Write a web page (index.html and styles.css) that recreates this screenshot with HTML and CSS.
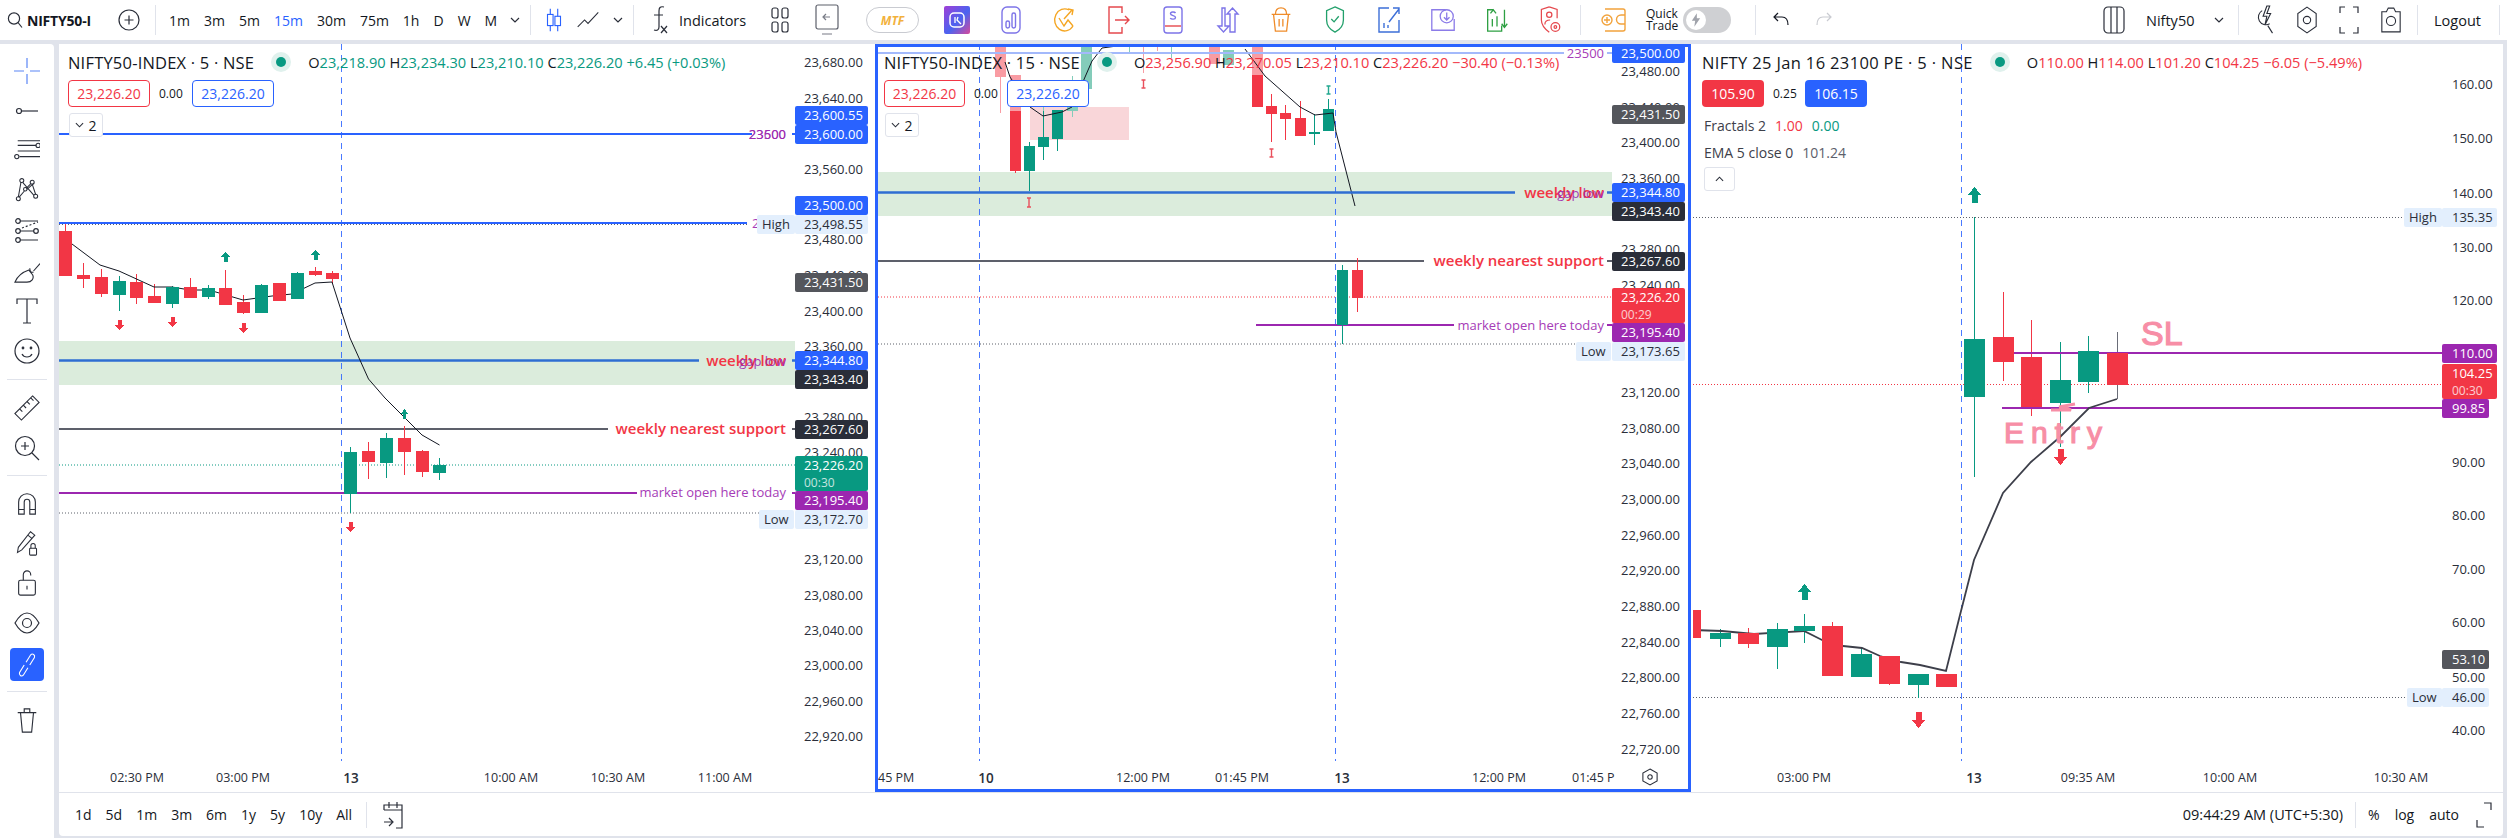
FILE: index.html
```html
<!DOCTYPE html>
<html lang="en">
<head>
<meta charset="utf-8">
<title>NIFTY50 charts</title>
<link rel="stylesheet" href="styles.css">
</head>
<body>
<div class="app">
  <header class="topbar">
    <div class="g g-sym">
      <svg class="i i16" viewBox="0 0 16 18"><circle cx="7" cy="7.5" r="5.6"/><path d="M11 11.5l4 5"/></svg>
      <span class="sym">NIFTY50-I</span>
      <svg class="i plus" viewBox="0 0 22 22"><circle cx="11" cy="11" r="10"/><path d="M11 6.500v9M6.500 11h9"/></svg>
    </div>
    <i class="sep"></i>
    <div class="g g-tf">
      <span class="tf">1m</span><span class="tf">3m</span><span class="tf">5m</span><span class="tf on">15m</span><span class="tf">30m</span><span class="tf">75m</span><span class="tf">1h</span><span class="tf">D</span><span class="tf">W</span><span class="tf">M</span>
      <svg class="i chev" viewBox="0 0 10 6"><path d="M1 1l4 4 4-4"/></svg>
    </div>
    <i class="sep"></i>
    <div class="g g-type">
      <svg class="i blue i24" viewBox="0 0 20 28"><path d="M6 2v24M14 2v24"/><rect x="3" y="8" width="6" height="12" fill="#fff"/><rect x="11" y="10" width="6" height="10" fill="#fff"/></svg>
      <svg class="i i24 line" viewBox="0 0 28 24"><path d="M2 20l8-8 4 4 12-13"/></svg>
      <svg class="i chev" viewBox="0 0 10 6"><path d="M1 1l4 4 4-4"/></svg>
    </div>
    <i class="sep"></i>
    <div class="g g-ind">
      <svg class="i fx" viewBox="0 0 20 30"><path d="M14 2c-4-1-5 1-5 4v16c0 3-2 4-5 3M4 10h9"/><path d="M11 21l6 7M17 21l-6 7"/></svg>
      <span class="indic">Indicators</span>
      <svg class="i grid" viewBox="0 0 18 26"><rect x="1" y="1" width="6" height="10" rx="2"/><rect x="11" y="1" width="6" height="10" rx="2"/><rect x="1" y="15" width="6" height="10" rx="2"/><rect x="11" y="15" width="6" height="10" rx="2"/></svg>
      <svg class="i replay" viewBox="0 0 24 32"><rect x="1" y="1" width="22" height="24" rx="2"/><path d="M15 13H9M11 10l-3 3 3 3M7 30h10" stroke="#787b86"/></svg>
      <span class="mtf">MTF</span>
      <span class="ib"><svg class="c" viewBox="0 0 26 28"><defs><linearGradient id="gr" x1="0" y1="0" x2="1" y2="1"><stop offset="0" stop-color="#a13fd6"/><stop offset=".55" stop-color="#4a63f0"/><stop offset="1" stop-color="#d74a9b"/></linearGradient></defs><rect width="26" height="28" rx="2" fill="url(#gr)"/><rect x="6" y="7" width="14" height="14" rx="4" fill="none" stroke="#fff" stroke-width="1.500"/><path d="M11 11v6M14 11l-1 3 4 4" fill="none" stroke="#fff" stroke-width="1.300"/></svg></span>
      <span class="ib"><svg class="c st s-vio" viewBox="0 0 20 28"><rect x="1" y="1" width="18" height="26" rx="5"/><rect x="5" y="15" width="3.500" height="7" rx="1.700"/><rect x="11" y="7" width="3.500" height="15" rx="1.700"/></svg></span>
      <span class="ib"><svg class="c st s-amb" viewBox="0 0 22 28"><path d="M15 4A10 11 0 1 0 19 20"/><path d="M5 12l5 8 4-6 5 6M14 3l5 1-1 5M18 4l-8 9"/></svg></span>
      <span class="ib"><svg class="c st s-red" viewBox="0 0 24 28"><path d="M15 7V1H2v26h13v-6"/><path d="M8 14h14M18 10l4 4-4 4"/></svg></span>
      <span class="ib"><svg class="c st s-vio" viewBox="0 0 20 28"><rect x="1" y="1" width="18" height="26" rx="3"/><path d="M2 20h16" stroke="#e5484d"/><path d="M12.500 7c-1-1.500-5-1.500-5 .7s5 1.600 5 3.700-4 2.300-5.300.7"/></svg></span>
      <span class="ib"><svg class="c st s-vio" viewBox="0 0 24 28"><path d="M7 2v18h-4l5.500 6 5.500-6h-4V2zM15 26V8h-3l5.500-6L23 8h-3v18z"/></svg></span>
      <span class="ib"><svg class="c st s-org" viewBox="0 0 24 30"><path d="M2 9h20M4 9l2 18h12l2-18M6 9c0-4 2-7 6-7s6 3 6 7M10 14v8M14 14v8"/></svg></span>
      <span class="ib"><svg class="c st s-grn" viewBox="0 0 20 30"><path d="M10 1l9 4v10c0 7-5 11-9 13-4-2-9-6-9-13V5z"/><path d="M6 14l3 3 5-6"/></svg></span>
      <span class="ib"><svg class="c st s-blu" viewBox="0 0 22 28"><path d="M11 2H1v24h20V14"/><path d="M11 16L21 3M15 2h6v6M6 22v-5M10 22v-3"/></svg></span>
      <span class="ib"><svg class="c st s-lav" viewBox="0 0 26 30"><path d="M16 4H1v22h24V14"/><circle cx="17" cy="11" r="7"/><path d="M17 7v8M14 12l3 3 3-3"/></svg></span>
      <span class="ib"><svg class="c st s-lim" viewBox="0 0 24 30"><path d="M8 4H2v23h15v-6"/><path d="M7 22v-8M12 22v-11M20 4v18M17 19l3 4 3-4M5 8l3-4 3 4"/></svg></span>
      <span class="ib"><svg class="c st s-red" viewBox="0 0 24 32"><path d="M10 1l9 3v10M10 1L1 4v12c0 7 5 11 9 14"/><circle cx="10" cy="10" r="3"/><path d="M5 21c0-4 3-5 6-5"/><circle cx="17" cy="24" r="5"/><circle cx="17" cy="24" r="1.500"/></svg></span>
    </div>
    <i class="sep"></i>
    <div class="g g-quick">
      <svg class="c st wallet" viewBox="0 0 26 26"><path d="M4 2h18a2 2 0 0 1 2 2v18a2 2 0 0 1-2 2H4"/><path d="M24 8h-4a4 4 0 0 0 0 9h4"/><circle cx="6" cy="13" r="5"/><path d="M6 10v6M3 13h6"/></svg>
      <span class="quick">Quick<br>Trade</span>
      <span class="toggle"><span class="knob"><svg viewBox="0 0 12 18"><path d="M7 1L1 10h4l-1 7 7-10H7z" fill="#a0a3ab"/></svg></span></span>
    </div>
    <i class="sep"></i>
    <div class="g g-undo">
      <svg class="i undo" viewBox="0 0 18 18"><path d="M6 2L2 6l4 4M2 6h8c4 0 6 3 6 8"/></svg>
      <svg class="i undo dim" viewBox="0 0 18 18"><path d="M12 2l4 4-4 4M16 6H8c-4 0-6 3-6 8"/></svg>
    </div>
    <div class="g g-right">
      <svg class="i layout" viewBox="0 0 22 28"><rect x="1" y="1" width="20" height="26" rx="4"/><path d="M8 1v26M14 1v26"/></svg>
      <span class="lname">Nifty50</span>
      <svg class="i chev" viewBox="0 0 10 6"><path d="M1 1l4 4 4-4"/></svg>
      <i class="sep"></i>
      <svg class="i ri" viewBox="0 0 22 32"><path d="M8 6a8 8 0 1 0 8 14M14 22l5 8"/><path d="M13 1l-4 11h4l-2 9 6-12h-4l3-8z"/></svg>
      <svg class="i ri" viewBox="0 0 24 30"><path d="M12 1l10 7v14l-10 7-10-7V8z"/><circle cx="12" cy="15" r="4"/></svg>
      <svg class="i ri" viewBox="0 0 20 30"><path d="M1 8V2h5M14 2h5v6M19 22v6h-5M6 28H1v-6"/></svg>
      <svg class="i ri" viewBox="0 0 24 30"><path d="M2 6h5l2-4h6l2 4h5v22H2z"/><circle cx="12" cy="16" r="5"/></svg>
      <i class="sep"></i>
      <span class="logout">Logout</span>
      <i class="sep"></i>
    </div>
  </header>

  <div class="main">
    <nav class="lefttb">
      <span class="tool"><svg class="t blue" viewBox="0 0 26 26"><path d="M13 0v10M13 16v10M0 13h10M16 13h10"/></svg></span>
      <span class="tool"><svg class="t" viewBox="0 0 26 26"><circle cx="5" cy="13" r="2.500"/><path d="M7.500 13H24"/></svg></span>
      <span class="tool"><svg class="t" viewBox="0 0 28 26"><path d="M4 2h24M4 7h20M4 13h24M6 19h22"/><circle cx="26" cy="7" r="2.300"/><circle cx="3" cy="19" r="2.300"/></svg></span>
      <span class="tool"><svg class="t" viewBox="0 0 26 30"><circle cx="7" cy="3" r="2.300"/><circle cx="19" cy="5" r="2.300"/><circle cx="11" cy="13" r="2"/><circle cx="3" cy="24" r="2.300"/><circle cx="23" cy="21" r="2.300"/><path d="M6 5L3 22M8 5l13 15M17 7l-5 5M10 15l-6 7M13 13l8-7M19 7l4 12"/></svg></span>
      <span class="tool"><svg class="t" viewBox="0 0 26 26"><circle cx="4" cy="3" r="2.300"/><circle cx="4" cy="13" r="2.300"/><circle cx="22" cy="13" r="2.300"/><circle cx="4" cy="22" r="2.300"/><path d="M6 3h18M6 13h14M6 22h18"/><path d="M8 10l16-6" stroke-dasharray="2 2"/></svg></span>
      <span class="tool"><svg class="t" viewBox="0 0 28 26"><path d="M1 25h13c5 0 8-4 6-8l-4-5c-6 2-12 6-15 13zM21 13l7-8M17 10c0 4 2 5 4 4"/></svg></span>
      <span class="tool"><svg class="t" viewBox="0 0 22 26"><path d="M1 6V1h20v5M11 1v24M7 25h8"/></svg></span>
      <span class="tool"><svg class="t" viewBox="0 0 26 26"><circle cx="13" cy="13" r="12"/><circle cx="9" cy="10" r=".8"/><circle cx="17" cy="10" r=".8"/><path d="M8 16c2 4 8 4 10 0"/></svg></span>
      <i class="tsep"></i>
      <span class="tool"><svg class="t" viewBox="0 0 28 28"><path d="M20 1l7 7L8 27l-7-7zM6 15l3 3M10 11l3 3M14 7l3 3M18 3l3 3"/></svg></span>
      <span class="tool"><svg class="t" viewBox="0 0 26 26"><circle cx="11" cy="11" r="9.500"/><path d="M11 7v8M7 11h8M18 18l7 7"/></svg></span>
      <i class="tsep s2"></i>
      <span class="tool"><svg class="t" viewBox="0 0 24 28"><path d="M3 26v-13a9 9 0 0 1 18 0v13h-6v-13a3 3 0 0 0-6 0v13zM3 21h6M15 21h6"/></svg></span>
      <span class="tool"><svg class="t" viewBox="0 0 24 30"><path d="M16 2l5 4-15 17-5 3 1-6zM13 6l5 4"/><rect x="15" y="21" width="8" height="8" rx="1"/><path d="M16.500 21v-3a2.500 2.500 0 0 1 5 0v3"/></svg></span>
      <span class="tool"><svg class="t" viewBox="0 0 20 28"><rect x="1" y="11" width="18" height="16" rx="2"/><path d="M6 11V5a4 4 0 0 1 8 0v1M10 17v4"/></svg></span>
      <span class="tool"><svg class="t" viewBox="0 0 26 26"><path d="M1 13C5 6 9 3 13 3s8 3 12 10c-4 7-8 10-12 10S5 20 1 13z"/><circle cx="13" cy="13" r="4.500"/></svg></span>
      <span class="tool act"><svg class="t" viewBox="0 0 20 28"><path d="M9 11l5-8c2-2 5 0 4 3l-5 8M11 17l-5 8c-2 2-5 0-4-3l5-8"/></svg></span>
      <i class="tsep"></i>
      <span class="tool"><svg class="t" viewBox="0 0 22 28"><path d="M1 6h20M4 6l2 21h10l2-21M8 6V2h6v4"/></svg></span>
    </nav>

    <section class="content">
      <div class="charts">

        <!-- chart 1 -->
        <article class="chart c1">
          <svg class="canvas" viewBox="59 44 816 748">
            <rect class="zone" x="59" y="341" width="736" height="44"/>
            <path class="vdash" d="M341.500 44V761"/>
            <path class="ln blue" d="M59 134H752M792 134h3M59 223H747M792 223h3"/>
            <path class="dot dk" d="M59 224.500H747M59 513H759"/>
            <path class="dot gn" d="M59 465H795"/>
            <path class="ln bluez" d="M59 360.500H699M792 360.500h3"/>
            <path class="ln gray" d="M59 429H608M792 429h3"/>
            <path class="ln purple" d="M59 493H637M792 493h3"/>
            <path class="wick rd" d="M65.500 224V231M83.500 263V288M101.500 269V297M136.500 274V304M154.500 284V303M190.500 278V298M225.500 270V305M243.500 295V314M315.500 267V276M332.500 271V284M368.500 442V479M404.500 426V475M422.500 450V477"/>
            <path class="wick gr" d="M119.500 276V311M172.500 286V308M208.500 285V299M261.500 284V313M297.500 272V299M350.500 447V513M386.500 433V478M439.500 458V480"/>
            <path class="ema" d="M72 244L100 265 119 271 154 287 172 287 190 290 209 290 243 300 272 296 292 294 315 283 332 282 350 338 368.500 379 385 398 404 417 422 435 439.500 445"/>
            <path class="b rd" d="M59 231h13v45h-13zM77 275h13v4h-13zM95 277h13v17h-13zM130 282h13v16h-13zM148 296h13v7h-13zM184 287h13v11h-13zM219 288h13v17h-13zM237 302h13v11h-13zM273 283h13v18h-13zM309 271h13v4h-13zM326 273h13v6h-13zM362 451h13v11h-13zM398 438h13v14h-13zM416 451h13v21h-13z"/>
            <path class="b gr" d="M113 281h13v14h-13zM166 287h13v17h-13zM202 288h13v9h-13zM255 285h13v28h-13zM291 273h13v26h-13zM344 452h13v42h-13zM380 438h13v25h-13zM433 465h13v8h-13z"/>
            <path class="b gr" d="M225.500 252l5 5h-3v5h-4v-5h-3zM315.500 250l5 5h-3v5h-4v-5h-3zM404.500 409l3.500 5h-2v5h-3v-5h-2z"/>
            <path class="b rd" d="M119.500 330l5-5h-3v-5h-4v5h-3zM172.500 327l5-5h-3v-5h-4v5h-3zM243.500 333l5-5h-3v-5h-4v5h-3zM350.500 532l5-5h-3v-5h-4v5h-3z"/>
            <text class="tx pp" x="786" y="139" text-anchor="end">23600</text>
            <text class="tx pp" x="786" y="139" text-anchor="end">23500</text>
            <text class="tx pp" x="752" y="228">23500</text>
            <text class="tx rdt bl" x="786" y="366" text-anchor="end">weekly low</text>
            <text class="tx pp" x="786" y="366" text-anchor="end">gap low</text>
            <text class="tx rdt bl" x="786" y="434" text-anchor="end">weekly nearest support</text>
            <text class="tx pp" x="786" y="497" text-anchor="end">market open here today</text>
          </svg>
          <div class="legend">
            <div class="row r1"><span class="title">NIFTY50-INDEX · 5 · NSE</span><span class="live"></span><span class="ohlc gt"><b>O</b>23,218.90 <b>H</b>23,234.30 <b>L</b>23,210.10 <b>C</b>23,226.20 +6.45 (+0.03%)</span></div>
            <div class="row r2"><span class="px out-r w82">23,226.20</span><span class="spread">0.00</span><span class="px out-b w82">23,226.20</span></div>
            <div class="row r3"><span class="fold"><svg class="i" viewBox="0 0 10 6"><path d="M1 1l4 4 4-4"/></svg>2</span></div>
          </div>
          <div class="axis a1">
            <span class="tick" style="top:18px">23,680.00</span><span class="tick" style="top:54px">23,640.00</span><span class="tick" style="top:125px">23,560.00</span><span class="tick" style="top:195px">23,480.00</span><span class="tick" style="top:231px">23,440.00</span><span class="tick" style="top:267px">23,400.00</span><span class="tick" style="top:302px">23,360.00</span><span class="tick" style="top:373px">23,280.00</span><span class="tick" style="top:408px">23,240.00</span><span class="tick" style="top:515px">23,120.00</span><span class="tick" style="top:551px">23,080.00</span><span class="tick" style="top:586px">23,040.00</span><span class="tick" style="top:621px">23,000.00</span><span class="tick" style="top:657px">22,960.00</span><span class="tick" style="top:692px">22,920.00</span>
            <span class="lab blu" style="top:62px">23,600.55</span><span class="lab blu" style="top:81px">23,600.00</span><span class="lab blu" style="top:152px">23,500.00</span><span class="lab pal" style="top:171px">23,498.55</span><span class="lab dgr" style="top:229px">23,431.50</span><span class="lab blu" style="top:307px">23,344.80</span><span class="lab blk" style="top:326px">23,343.40</span><span class="lab blk" style="top:376px">23,267.60</span>
            <span class="lab grn two" style="top:412px">23,226.20<small>00:30</small></span><span class="lab pur" style="top:447px">23,195.40</span><span class="lab pal" style="top:466px">23,172.70</span>
            <span class="tag" style="top:171px;left:-38px">High</span><span class="tag" style="top:466px;left:-36px">Low</span>
          </div>
          <div class="times">
            <span style="left:78px">02:30 PM</span><span style="left:184px">03:00 PM</span><span class="bd" style="left:292px">13</span><span style="left:452px">10:00 AM</span><span style="left:559px">10:30 AM</span><span style="left:666px">11:00 AM</span>
          </div>
        </article>

        <!-- chart 2 -->
        <article class="chart c2">
          <svg class="canvas" viewBox="875 44 816 748">
            <rect class="zone" x="875" y="172" width="737" height="44"/>
            <rect class="pinkz" x="1030" y="107" width="99" height="33"/>
            <path class="vdash" d="M979.500 44V761M1335.500 44V761"/>
            <path class="dot rdd" d="M878 297H1612"/>
            <path class="dot dk" d="M878 344H1576"/>
            <path class="wick pr" d="M1000.500 47V113M1143.500 44V73M1157.500 47V51"/>
            <path class="wick rd" d="M1015.500 111V173M1271.500 94V142M1285.500 105V140M1300.500 101V136"/>
            <path class="wick pg" d="M1043.500 94V111M1072.500 76V117M1129.500 47V52M1171.500 47V58"/>
            <path class="wick gr" d="M1029.500 142V191M1043.500 111V160M1057.500 139V151M1314.500 114V145M1328.500 99V131"/>
            <path class="b pr" d="M995 47h11v30h-11zM1010 75h11v36h-11zM1209 47h11v17h-11zM1252 47h11v28h-11z"/>
            <path class="b rd" d="M995 44h11v3h-11zM1010 111h11v60h-11zM1252 44h11v3h-11zM1252 75h11v32h-11zM1266 106h11v8h-11zM1280 113h11v6h-11zM1295 118h11v18h-11z"/>
            <path class="b pg" d="M1067 105h11v6h-11zM1081 47h11v42h-11zM1223 50h11v15h-11z"/>
            <path class="b gr" d="M1024 146h11v25h-11zM1038 137h11v10h-11zM1052 110h11v29h-11zM1081 44h11v3h-11zM1124 44h11v3h-11zM1238 44h11v3h-11zM1309 132h11v2h-11zM1323 109h11v22h-11z"/>
            <path class="ema" d="M1005 62L1010 77 1030 107 1043 116 1062 112 1072 107 1092 61 1102 48 1117 46M1245 49L1265 76 1300 107 1315 115 1333 113 1336 132 1355 206"/>
            <path class="ln lblue" d="M878 53H1564M1607 53h5"/>
            <path class="ln bluez" d="M878 192.500H1515M1607 192.500h5"/>
            <path class="ln gray" d="M878 261H1424M1607 261h5"/>
            <path class="ln purple" d="M1256 325H1454M1607 325h5"/>
            <path class="wick gr" d="M1342.500 265V344"/>
            <path class="wick rd" d="M1357.500 258V312"/>
            <path class="b gr" d="M1337 270h11v55h-11z"/>
            <path class="b rd" d="M1352 270h11v28h-11z"/>
            <path class="iarrow ar" d="M1027 198h4M1029 198v9M1027 207h4M1141.500 80h4M1143.500 80v8M1141.500 88h4M1269.500 149h4M1271.500 149v8M1269.500 157h4"/>
            <path class="iarrow ag" d="M1326.500 86h4M1328.500 86v8M1326.500 94h4"/>
            <text class="tx pp" x="1604" y="58" text-anchor="end">23500</text>
            <text class="tx rdt bl" x="1604" y="198" text-anchor="end">weekly low</text>
            <text class="tx pp" x="1604" y="198" text-anchor="end">gap low</text>
            <text class="tx rdt bl" x="1604" y="266" text-anchor="end">weekly nearest support</text>
            <text class="tx pp" x="1604" y="330" text-anchor="end">market open here today</text>
          </svg>
          <div class="legend">
            <div class="row r1"><span class="title">NIFTY50-INDEX · 15 · NSE</span><span class="live"></span><span class="ohlc rt"><b>O</b>23,256.90 <b>H</b>23,270.05 <b>L</b>23,210.10 <b>C</b>23,226.20 −30.40 (−0.13%)</span></div>
            <div class="row r2"><span class="px out-r w80">23,226.20</span><span class="spread">0.00</span><span class="px out-b w82">23,226.20</span></div>
            <div class="row r3"><span class="fold"><svg class="i" viewBox="0 0 10 6"><path d="M1 1l4 4 4-4"/></svg>2</span></div>
          </div>
          <div class="axis a2">
            <span class="tick" style="top:27px">23,480.00</span><span class="tick" style="top:63px">23,440.00</span><span class="tick" style="top:98px">23,400.00</span><span class="tick" style="top:134px">23,360.00</span><span class="tick" style="top:205px">23,280.00</span><span class="tick" style="top:241px">23,240.00</span><span class="tick" style="top:348px">23,120.00</span><span class="tick" style="top:384px">23,080.00</span><span class="tick" style="top:419px">23,040.00</span><span class="tick" style="top:455px">23,000.00</span><span class="tick" style="top:491px">22,960.00</span><span class="tick" style="top:526px">22,920.00</span><span class="tick" style="top:562px">22,880.00</span><span class="tick" style="top:598px">22,840.00</span><span class="tick" style="top:633px">22,800.00</span><span class="tick" style="top:669px">22,760.00</span><span class="tick" style="top:705px">22,720.00</span>
            <span class="lab blu" style="top:0px">23,500.00</span><span class="lab dgr" style="top:61px">23,431.50</span><span class="lab blu" style="top:139px">23,344.80</span><span class="lab blk" style="top:158px">23,343.40</span><span class="lab blk" style="top:208px">23,267.60</span>
            <span class="lab red two" style="top:244px">23,226.20<small>00:29</small></span><span class="lab pur" style="top:279px">23,195.40</span><span class="lab pal" style="top:298px">23,173.65</span>
            <span class="tag" style="top:298px;left:-36px">Low</span>
          </div>
          <div class="times">
            <span class="from" style="left:3px">45 PM</span><span class="bd" style="left:111px">10</span><span style="left:268px">12:00 PM</span><span style="left:367px">01:45 PM</span><span class="bd" style="left:467px">13</span><span style="left:624px">12:00 PM</span><span class="from" style="left:697px">01:45 P</span>
          </div>
          <svg class="i gear" viewBox="0 0 18 20"><path d="M9 1l8 4.500v9L9 19l-8-4.500v-9z"/><circle cx="9" cy="10" r="2.500"/></svg>
        </article>

        <!-- chart 3 -->
        <article class="chart c3">
          <svg class="canvas" viewBox="1693 44 810 748">
            <path class="vdash" d="M1961.500 44V761"/>
            <path class="dot dk" d="M1693 217.500H2404M1693 697.500H2406"/>
            <path class="dot rdd" d="M1693 384.500H2442"/>
            <path class="wick gr" d="M1974.500 217V477M2060.500 342V447M2088.500 336V393M1720.500 629V647M1777.500 623V669M1804.500 614V643M1861.500 648V677M1918.500 674V698"/>
            <path class="wick rd" d="M2003.500 292V381M2031.500 320V416M1748.500 628V648M1832.500 622V676M1889.500 656V685"/>
            <path class="wick gy" d="M2117.500 332V399"/>
            <path class="ln purple" d="M2013 353H2442M2002 408H2442"/>
            <path class="emab" d="M1693 630L1722 631 1754 634 1804 631 1822 640 1843 646 1862 648 1880 656 1901 662 1920 665 1946 671 1960 615 1974 560 2003 493 2031 462 2060 437 2089 408 2117 399"/>
            <path class="b rd" d="M1693 610h8v28h-8zM1993 337h21v25h-21zM2021 357h21v50h-21zM2107 353h21v32h-21zM1738 633h21v11h-21zM1822 626h21v50h-21zM1879 656h21v28h-21zM1936 674h21v13h-21z"/>
            <path class="b gr" d="M1964 339h21v58h-21zM2050 380h21v23h-21zM2078 351h21v31h-21zM1710 633h21v6h-21zM1767 629h21v18h-21zM1794 626h21v5h-21zM1851 654h21v23h-21zM1908 674h21v11h-21z"/>
            <path class="b gr" d="M1974.500 187l6.500 8h-3.500v8h-6v-8h-3.500zM1804.500 584l6.500 8h-3.500v8h-6v-8h-3.500z"/>
            <path class="b rd" d="M2060.500 465l6.500-8h-3.500v-8h-6v8h-3.500zM1918.500 728l6.500-8h-3.500v-8h-6v8h-3.500z"/>
            <path class="scrib" d="M2051 410h20l-6 -3h-6l16 -3"/>
            <text class="hand sl" x="2141" y="345">SL</text>
            <text class="hand en" x="2004" y="443">Entry</text>
          </svg>
          <div class="legend">
            <div class="row r1"><span class="title t3">NIFTY 25 Jan 16 23100 PE · 5 · NSE</span><span class="live"></span><span class="ohlc rt"><b>O</b>110.00 <b>H</b>114.00 <b>L</b>101.20 <b>C</b>104.25 −6.05 (−5.49%)</span></div>
            <div class="row r2"><span class="px fill-r">105.90</span><span class="spread sm">0.25</span><span class="px fill-b">106.15</span></div>
            <div class="row r3"><span class="study">Fractals 2</span><span class="val rt">1.00</span><span class="val gt">0.00</span></div>
            <div class="row r4"><span class="study">EMA 5 close 0</span><span class="val gy">101.24</span></div>
            <div class="row r5"><span class="fold up"><svg class="i" viewBox="0 0 10 6"><path d="M1 5l4-4 4 4"/></svg></span></div>
          </div>
          <div class="axis a3">
            <span class="tick" style="top:40px">160.00</span><span class="tick" style="top:94px">150.00</span><span class="tick" style="top:149px">140.00</span><span class="tick" style="top:203px">130.00</span><span class="tick" style="top:256px">120.00</span><span class="tick" style="top:418px">90.00</span><span class="tick" style="top:471px">80.00</span><span class="tick" style="top:525px">70.00</span><span class="tick" style="top:578px">60.00</span><span class="tick" style="top:633px">50.00</span><span class="tick" style="top:686px">40.00</span>
            <span class="lab pal" style="top:164px">135.35</span><span class="lab pur" style="top:300px">110.00</span><span class="lab red two" style="top:320px">104.25<small>00:30</small></span><span class="lab pur" style="top:355px">99.85</span><span class="lab dgr" style="top:606px">53.10</span><span class="lab pal" style="top:644px">46.00</span>
            <span class="tag" style="top:164px;left:-38px">High</span><span class="tag" style="top:644px;left:-35px">Low</span>
          </div>
          <div class="times">
            <span style="left:111px">03:00 PM</span><span class="bd" style="left:281px">13</span><span style="left:395px">09:35 AM</span><span style="left:537px">10:00 AM</span><span style="left:708px">10:30 AM</span>
          </div>
        </article>
      </div>

      <footer class="bottombar">
        <div class="ranges"><span>1d</span><span>5d</span><span>1m</span><span>3m</span><span>6m</span><span>1y</span><span>5y</span><span>10y</span><span>All</span></div>
        <i class="sep b"></i>
        <svg class="i cal" viewBox="0 0 22 30"><path d="M2 10V5h18v23h-6M2 10h18M7 2v6M15 2v6M2 22h8M7 18l4 4-4 4"/></svg>
        <div class="bright">
          <span class="clock">09:44:29 AM (UTC+5:30)</span>
          <i class="sep b"></i>
          <span class="opt o1">%</span><span class="opt">log</span><span class="opt">auto</span>
          <svg class="i exp" viewBox="0 0 16 26"><path d="M1 18v7h7M8 1h7v7"/></svg>
        </div>
      </footer>
    </section>
  </div>
</div>
</body>
</html>
```
FILE: styles.css
```css
* { box-sizing: border-box; }
html, body { margin: 0; height: 100%; }
body {
  background: #e0e3eb;
  color: #131722;
  font-family: "Open Sans", "Noto Sans", sans-serif;
  font-size: 14px;
  overflow: hidden;
}
.app { width: 2507px; height: 838px; display: flex; flex-direction: column; }

/* generic icons */
.i { fill: none; stroke: #2a2e39; stroke-width: 1.2; flex: none; display: block; }
.c { flex: none; display: block; }
.st { fill: none; stroke-width: 1.4; width: 26px; height: 28px; }
.s-vio { stroke: #7d74e8; }
.s-amb { stroke: #f5a623; }
.s-red { stroke: #e5484d; }
.s-org { stroke: #ef8c2a; }
.s-grn { stroke: #22a06b; }
.s-blu { stroke: #3d6fd8; }
.s-lav { stroke: #8b7be8; }
.s-lim { stroke: #2ea043; }
.i.blue { stroke: #2962ff; }
.i16 { width: 16px; height: 18px; }
.i24 { width: 24px; height: 26px; }
.chev { width: 10px; height: 6px; }

/* top bar */
.topbar { height: 40px; flex: none; background: #fff; display: flex; align-items: center; margin-bottom: 4px; }
.sep { flex: none; display: block; width: 1px; height: 30px; background: #e0e3eb; }
.g { display: flex; align-items: center; height: 100%; flex: none; }
.g-sym { width: 155px; padding-left: 7px; }
.sym { font-weight: 700; font-size: 14px; width: 70px; margin-left: 4px; white-space: nowrap; letter-spacing: -.2px; }
.plus { width: 22px; height: 22px; margin-left: 21px; }
.g-tf { width: 374px; padding-left: 6px; }
.tf { padding: 0 7px; font-size: 14px; white-space: nowrap; }
.tf.on { color: #2962ff; }
.g-tf .chev { margin-left: 6px; }
.g-type { width: 102px; padding-left: 11px; }
.g-type .line { margin-left: 10px; }
.g-type .chev { margin-left: 13px; }
.g-ind { width: 946px; padding-left: 16px; }
.fx { width: 20px; height: 30px; }
.indic { margin-left: 9px; width: 72px; font-size: 14.5px; white-space: nowrap; }
.grid { width: 18px; height: 26px; margin-left: 20px; }
.replay { width: 24px; height: 32px; margin-left: 26px; stroke: #5d606b; }
.mtf {
  width: 53px; height: 26px; margin-left: 27px; border: 1.5px solid #c9cbd1; border-radius: 13px;
  display: flex; align-items: center; justify-content: center; font-weight: 700; font-style: italic; font-size: 12px;
  color: #f2b13c; flex: none;
}
.ib { width: 54px; flex: none; display: flex; justify-content: center; }
.ib .c { height: 28px; }
.mtf + .ib { margin-left: 11px; }
.g-quick { width: 174px; padding-left: 20px; }
.wallet { width: 26px; height: 26px; stroke: #f2a33c; }
.quick { font-size: 12px; line-height: 12px; margin-left: 19px; width: 37px; }
.toggle { width: 48px; height: 26px; border-radius: 13px; background: #cfd0d3; margin-left: 0; padding: 3px; display: flex; flex: none; }
.knob { width: 20px; height: 20px; border-radius: 50%; background: #fff; display: flex; align-items: center; justify-content: center; }
.knob svg { width: 10px; height: 16px; }
.g-undo { width: 86px; padding-left: 16px; }
.undo { width: 18px; height: 18px; stroke: #131722; }
.undo.dim { margin-left: 25px; stroke: #c9cbd1; }
.g-right { margin-left: auto; padding-right: 7px; }
.layout { width: 22px; height: 28px; }
.lname { margin-left: 21px; width: 68px; font-size: 14.5px; }
.g-right > .sep:nth-of-type(1) { margin-left: 3px; }
.g-right .chev { margin-left: 0; margin-right: 11px; }
.ri { width: 22px; height: 30px; margin-left: 20px; }
.g-right .sep + .ri { margin-left: 15px; }
.ri + .sep { margin-left: 15px; }
.logout { margin-left: 16px; width: 65px; font-size: 14.5px; }

/* main layout */
.main { flex: none; height: 792px; display: flex; gap: 5px; }
.lefttb { width: 54px; flex: none; background: #fff; border-radius: 0 4px 0 0; display: flex; flex-direction: column; align-items: center; padding-top: 7px; height: 794px; }
.tool { width: 34px; height: 40px; flex: none; display: flex; align-items: center; justify-content: center; }
.t { fill: none; stroke: #2a2e39; stroke-width: 1.2; width: 26px; height: 26px; display: block; }
.t.blue { stroke: #5b86f5; }
.tool.act { height: 33px; margin: 5px 0 2px; background: #2962ff; border-radius: 4px; }
.act .t { stroke: #fff; width: 20px; height: 26px; }
.tsep { flex: none; width: 40px; height: 1px; background: #e0e3eb; margin: 8px 0; display: block; }
.tsep.s2 { margin: 7px 0; }
.content { width: 2444px; flex: none; display: flex; flex-direction: column; }
.charts { flex: none; height: 748px; display: flex; background: #fff; }
.chart { position: relative; overflow: hidden; flex: none; background: #fff; height: 748px; }
.c1 { width: 816px; }
.c2 { width: 816px; }
.c3 { width: 810px; margin-left: 2px; }
.canvas { position: absolute; left: 0; top: 0; width: 100%; height: 100%; display: block; }
.c2::after { content: ""; position: absolute; inset: 0; border: 3px solid #2962ff; pointer-events: none; }

/* chart shapes */
.zone { fill: #dbecdc; }
.pinkz { fill: #f9d6d9; }
.vdash { stroke: #2962ff; stroke-width: 1; stroke-dasharray: 6 5; fill: none; opacity: .85; }
.ln { fill: none; stroke-width: 2; }
.ln.blue { stroke: #2962ff; }
.ln.lblue { stroke: #a3b9fb; stroke-width: 2; }
.ln.bluez { stroke: #2f6ed2; stroke-width: 2.6; }
.ln.gray { stroke: #5d606b; }
.ln.purple { stroke: #9c27b0; }
.dot { fill: none; stroke-width: 1; stroke-dasharray: 1 2; }
.dot.dk { stroke: #5d606b; }
.dot.gn { stroke: #089981; }
.dot.rdd { stroke: #f23645; }
.wick { fill: none; stroke-width: 1; }
.wick.rd { stroke: #f23645; }
.wick.gr { stroke: #089981; }
.wick.pr { stroke: #f99ca3; }
.wick.pg { stroke: #84ccba; }
.wick.gy { stroke: #6a6d78; }
.b { stroke: none; shape-rendering: crispEdges; }
.b.rd { fill: #f23645; }
.b.gr { fill: #089981; }
.b.pr { fill: #f99ca3; }
.b.pg { fill: #84ccba; }
.ema { fill: none; stroke: #131722; stroke-width: 1; }
.emab { fill: none; stroke: #3d3f4a; stroke-width: 1.8; }
.iarrow { fill: none; stroke-width: 1.4; }
.ar { stroke: #e9505c; }
.ag { stroke: #22a890; }
.scrib { fill: none; stroke: #f78ea6; stroke-width: 3; }
.tx { font-size: 13px; font-family: "Open Sans", sans-serif; }
.pp { fill: #9c27b0; opacity: .9; }
.rdt { fill: #f23645; }
.bl { font-weight: 600; font-size: 15px; }
.hand { fill: #f78ea6; stroke: #f78ea6; stroke-width: 1.2; font-family: "Liberation Sans", sans-serif; }
.sl { font-size: 34px; }
.en { font-size: 30px; letter-spacing: 7px; }

/* legend */
.legend { position: absolute; left: 9px; top: 6px; display: flex; flex-direction: column; align-items: flex-start; }
.row { display: flex; align-items: center; white-space: nowrap; }
.r1 { height: 24px; }
.r2 { height: 27px; margin-top: 6px; }
.r3 { height: 24px; margin-top: 6px; }
.r4 { height: 24px; margin-top: 3px; }
.r5 { height: 24px; margin-top: 3px; }
.title { font-size: 16.5px; letter-spacing: .2px; }
.title.t3 { letter-spacing: .35px; }
.live { width: 20px; height: 20px; border-radius: 50%; background: #e0f1ed; margin-left: 17px; position: relative; flex: none; }
.live::after { content: ""; position: absolute; left: 5px; top: 5px; width: 10px; height: 10px; border-radius: 50%; background: #089981; }
.ohlc { margin-left: 17px; font-size: 14.6px; }
.ohlc b { font-weight: 400; color: #131722; }
.gt { color: #089981; }
.rt { color: #f23645; }
.gy { color: #5d606b; }
.px { height: 27px; display: flex; align-items: center; justify-content: center; border-radius: 4px; font-size: 14px; }
.out-r { border: 1px solid #f23645; color: #f23645; background: #fff; }
.out-b { border: 1px solid #2962ff; color: #2962ff; background: #fff; }
.w82 { width: 82px; }
.w80 { width: 81px; }
.fill-r { background: #f23645; color: #fff; width: 62px; }
.fill-b { background: #2962ff; color: #fff; width: 62px; }
.spread { width: 42px; padding-left: 9px; font-size: 12px; }
.spread.sm { width: 41px; }
.fold { height: 24px; width: 34px; border: 1px solid #e0e3eb; border-radius: 3px; display: flex; align-items: center; justify-content: center; gap: 4px; background: #fff; font-size: 14px; margin-left: 1px; }
.fold .i { width: 9px; height: 6px; }
.fold.up { width: 31px; margin-left: 2px; }
.study { color: #3d404a; font-size: 14px; margin-left: 2px; }
.val { margin-left: 9px; font-size: 14px; }

/* price axis */
.axis { position: absolute; top: 0; bottom: 0; }
.a1 { left: 736px; right: 0; }
.a2 { left: 737px; right: 0; }
.a3 { left: 749px; right: 0; }
.tick, .lab, .tag { position: absolute; height: 19px; line-height: 19px; font-size: 13px; white-space: nowrap; }
.tick { left: 9px; margin-top: -9px; color: #2a2e39; }
.a3 .tick { left: 10px; }
.lab { left: 0; padding: 0 5px 0 9px; color: #fff; border-radius: 2px; }
.a3 .lab { padding: 0 4px 0 10px; }
.lab.two { height: 35px; line-height: 17px; padding-top: 1px; }
.lab small { display: block; font-size: 12px; opacity: .75; }
.blu { background: #2962ff; }
.blk { background: #2a2e39; }
.dgr { background: #54565c; }
.pal { background: #e3effd; color: #2a2e39; }
.grn { background: #089981; }
.red { background: #f23645; }
.pur { background: #9c27b0; }
.tag { background: #e3effd; color: #2a2e39; padding: 0 5px; border-radius: 2px; }

/* time axis */
.times { position: absolute; left: 0; right: 0; bottom: 0; height: 30px; }
.times span { position: absolute; top: 7px; font-size: 12.5px; line-height: 18px; white-space: nowrap; color: #2a2e39; transform: translateX(-50%); }
.times .from { transform: none; }
.times .bd { font-weight: 600; font-size: 13.5px; }
.gear { position: absolute; left: 767px; top: 723px; width: 16px; height: 20px; }

/* bottom bar */
.bottombar { height: 44px; flex: none; background: #fff; border-top: 1px solid #e0e3eb; display: flex; align-items: center; border-radius: 0 0 4px 4px; }
.ranges { display: flex; width: 307px; padding-left: 9px; }
.ranges span { padding: 0 7px; font-size: 14px; }
.sep.b { height: 26px; }
.cal { width: 22px; height: 30px; margin-left: 15px; }
.bright { margin-left: auto; display: flex; align-items: center; padding-right: 11px; }
.clock { font-size: 14.5px; margin-right: 12px; }
.opt { font-size: 14px; margin-left: 15px; }
.o1 { margin-left: 12px; }
.exp { width: 16px; height: 26px; margin-left: 17px; }
```
